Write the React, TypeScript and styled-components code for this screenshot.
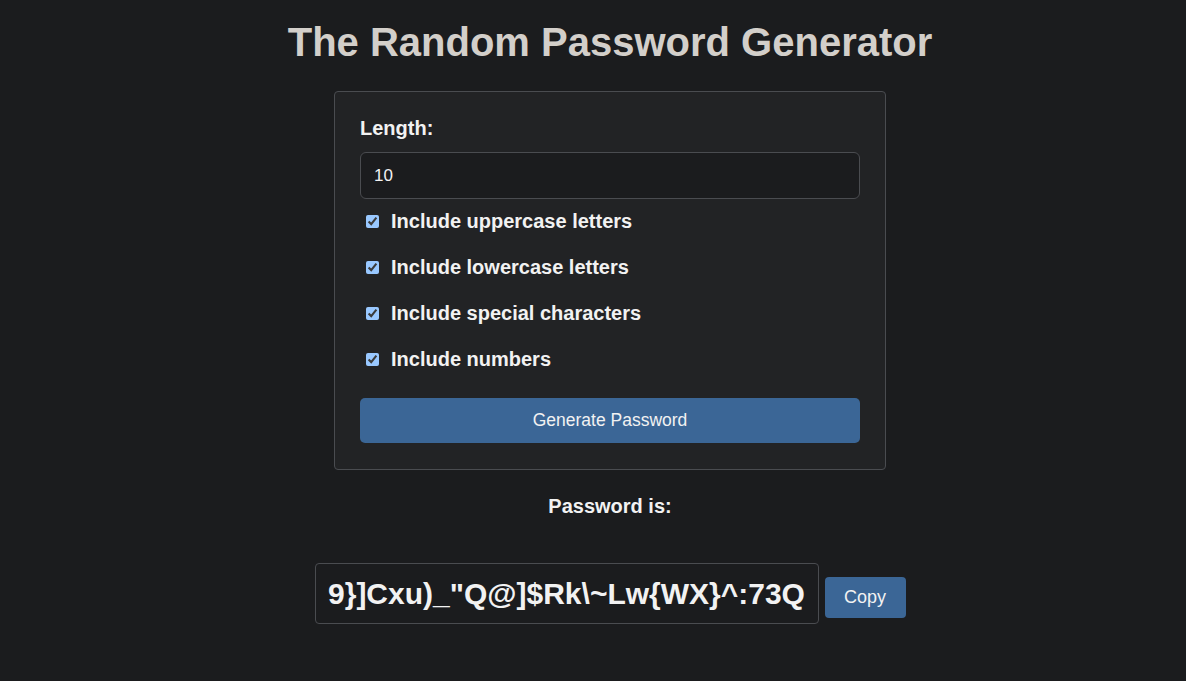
import React, { useState } from "react";
import styled, { createGlobalStyle } from "styled-components";

const GlobalStyle = createGlobalStyle`
  html, body {
    margin: 0;
    padding: 0;
    background: #1b1c1e;
    color-scheme: dark;
  }
  body {
    font-family: "Liberation Sans", Arial, sans-serif;
    color: #f2f2f2;
  }
`;

const Page = styled.main`
  display: flex;
  flex-direction: column;
  align-items: center;
  padding: 19px 0 0 34px;
  min-height: 681px;
  box-sizing: border-box;
`;

const Title = styled.h1`
  margin: 0 0 26px;
  font-size: 40px;
  line-height: 46px;
  font-weight: 700;
  color: #d3cfca;
`;

const Card = styled.section`
  width: 552px;
  box-sizing: border-box;
  padding: 25px 25px 26px;
  background: #222325;
  border: 1px solid #4a4c50;
  border-radius: 4px;
  display: flex;
  flex-direction: column;
`;

const FieldLabel = styled.label`
  font-size: 20px;
  font-weight: 700;
  line-height: 23px;
  margin-bottom: 12px;
`;

const LengthInput = styled.input`
  height: 47px;
  box-sizing: border-box;
  padding: 0 13px;
  background: #1b1c1e;
  border: 1px solid #4a4c50;
  border-radius: 6px;
  color: #f2f2f2;
  font-family: "Liberation Sans", Arial, sans-serif;
  font-size: 17px;
  outline: none;
  margin-bottom: 11px;
`;

const OptionRow = styled.label`
  display: flex;
  align-items: center;
  height: 23px;
  margin-bottom: 23px;
  font-size: 20px;
  font-weight: 700;
  cursor: pointer;

  &:last-of-type {
    margin-bottom: 27px;
  }

  input {
    width: 13px;
    height: 13px;
    margin: 0 12px 0 6px;
  }
`;

const PrimaryButton = styled.button`
  height: 45px;
  border: none;
  border-radius: 5px;
  background: #3b6696;
  color: #f2f2f2;
  font-family: "Liberation Sans", Arial, sans-serif;
  font-size: 17.5px;
  cursor: pointer;
`;

const ResultLabel = styled.div`
  margin-top: 25px;
  font-size: 20px;
  font-weight: 700;
  line-height: 23px;
`;

const ResultRow = styled.div`
  display: flex;
  align-items: center;
  gap: 6px;
  margin-top: 45px;
`;

const PasswordBox = styled.div`
  width: 504px;
  height: 61px;
  box-sizing: border-box;
  display: flex;
  align-items: center;
  justify-content: center;
  border: 1px solid #4a4c50;
  border-radius: 4px;
  background: #1b1c1e;
  font-size: 30px;
  font-weight: 700;
  color: #f2f2f2;
  white-space: nowrap;
  overflow: hidden;
`;

const CopyButton = styled.button`
  width: 81px;
  height: 41px;
  margin-top: 7px;
  border: none;
  border-radius: 4px;
  background: #3b6696;
  color: #f2f2f2;
  font-family: "Liberation Sans", Arial, sans-serif;
  font-size: 18px;
  cursor: pointer;
`;

const options = [
  "Include uppercase letters",
  "Include lowercase letters",
  "Include special characters",
  "Include numbers",
];

export default function App() {
  const [length, setLength] = useState("10");
  return (
    <>
      <GlobalStyle />
      <Page>
        <Title>The Random Password Generator</Title>
        <Card>
          <FieldLabel htmlFor="len">Length:</FieldLabel>
          <LengthInput
            id="len"
            value={length}
            onChange={(e) => setLength(e.target.value)}
          />
          {options.map((o) => (
            <OptionRow key={o}>
              <input type="checkbox" defaultChecked />
              {o}
            </OptionRow>
          ))}
          <PrimaryButton>Generate Password</PrimaryButton>
        </Card>
        <ResultLabel>Password is:</ResultLabel>
        <ResultRow>
          <PasswordBox>{'9}]Cxu)_"Q@]$Rk\\~Lw{WX}^:73Q'}</PasswordBox>
          <CopyButton>Copy</CopyButton>
        </ResultRow>
      </Page>
    </>
  );
}
